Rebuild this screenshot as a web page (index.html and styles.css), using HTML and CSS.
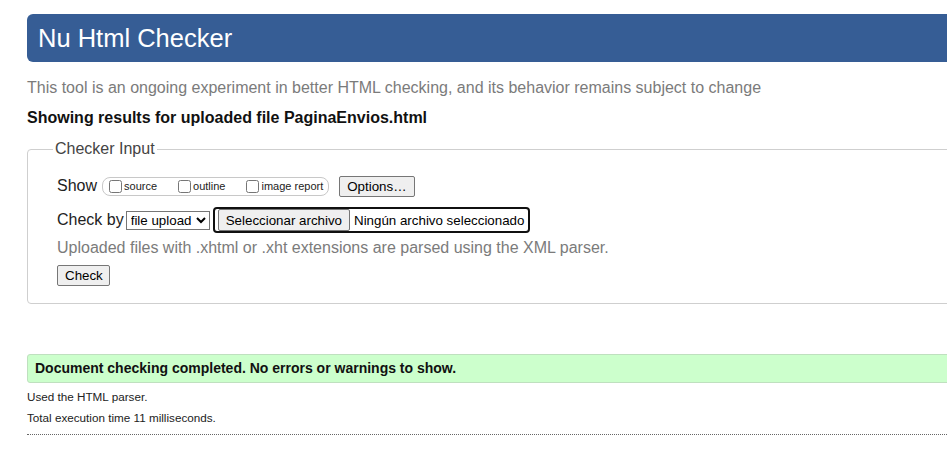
FILE: index.html
```html
<!DOCTYPE html>
<html lang="en">
<head>
<meta charset="utf-8">
<title>Nu Html Checker</title>
<link rel="stylesheet" href="styles.css">
</head>
<body>
<div class="page">
  <h1 class="title">Nu Html Checker</h1>
  <p class="intro">This tool is an ongoing experiment in better HTML checking, and its behavior remains subject to change</p>
  <p class="showing">Showing results for uploaded file PaginaEnvios.html</p>
  <form class="checker">
    <fieldset class="input-set">
      <legend class="legend">Checker Input</legend>
      <div class="row show-row">
        <span class="row-label">Show</span>
        <span class="show-box">
          <label class="opt"><input type="checkbox">source</label>
          <label class="opt"><input type="checkbox">outline</label>
          <label class="opt"><input type="checkbox">image report</label>
        </span>
        <button type="button" class="btn options-btn">Options…</button>
      </div>
      <div class="row by-row">
        <span class="row-label">Check by</span>
        <select class="by-select"><option>file upload</option></select>
        <span class="file-input">
          <button type="button" class="btn file-btn">Seleccionar archivo</button>
          <span class="file-name">Ningún archivo seleccionado</span>
        </span>
      </div>
      <p class="hint">Uploaded files with .xhtml or .xht extensions are parsed using the XML parser.</p>
      <div class="row">
        <button type="button" class="btn check-btn">Check</button>
      </div>
    </fieldset>
  </form>
  <p class="success">Document checking completed. No errors or warnings to show.</p>
  <p class="meta">Used the HTML parser.</p>
  <p class="meta">Total execution time 11 milliseconds.</p>
  <div class="rule"></div>
</div>
</body>
</html>
```
FILE: styles.css
```css
html, body {
  overflow: hidden;
}
body {
  margin: 0;
  background: #fff;
  font-family: "Liberation Sans", Arial, sans-serif;
  color: #222;
}
.page {
  width: 1100px;
  padding: 14px 0 0 27px;
}
.title {
  margin: 0;
  height: 48px;
  line-height: 48px;
  padding-left: 11px;
  background: #365d95;
  color: #fff;
  font-size: 25.5px;
  font-weight: normal;
  border-radius: 6px;
}
.intro {
  margin: 16px 0 0;
  font-size: 16px;
  line-height: 20px;
  color: #7b7b7b;
}
.showing {
  margin: 10px 0 0;
  font-size: 16px;
  line-height: 20px;
  font-weight: bold;
  color: #111;
}
.checker {
  margin: 12px 0 0;
}
.input-set {
  margin: 0;
  border: 1px solid #cfcfcf;
  border-radius: 4px;
  padding: 18px 0 17px 29px;
}
.legend {
  padding: 0 2px;
  margin-left: -4px;
  font-size: 16px;
  color: #444;
}
.row {
  display: flex;
  align-items: center;
}
.row-label {
  font-size: 16px;
  color: #222;
}
.show-row {
  height: 20px;
}
.show-box {
  display: flex;
  align-items: center;
  margin-left: 5px;
  height: 17px;
  border: 1px solid #c8c8c8;
  border-radius: 8px;
  padding: 0 5px 0 2px;
}
.opt {
  display: flex;
  align-items: center;
  font-size: 11px;
  margin-right: 17px;
}
.opt:last-child {
  margin-right: 0;
}
.opt input {
  margin: 1px 2px 0 4px;
  width: 13px;
  height: 13px;
}
.btn {
  font-family: "Liberation Sans", Arial, sans-serif;
  font-size: 13.33px;
  color: #000;
  background: #efefef;
  border: 1px solid #767676;
  border-radius: 2px;
  padding: 1px 7px;
  height: 21px;
}
.options-btn {
  margin-left: 10px;
}
.by-row {
  margin-top: 11px;
  height: 26px;
}
.by-select {
  margin-left: 2px;
  font-family: "Liberation Sans", Arial, sans-serif;
  font-size: 13.33px;
  height: 19px;
  width: 84px;
  padding: 0;
  border: 1px solid #767676;
  border-radius: 0;
  background: #fff;
  color: #000;
}
.file-input {
  display: flex;
  align-items: center;
  margin-left: 3px;
  height: 22px;
  border: 2px solid #101010;
  border-radius: 4px;
  padding: 0 4px 0 3px;
}
.file-btn {
  height: 22px;
  margin-right: 4px;
}
.file-name {
  font-size: 13.33px;
  color: #000;
}
.hint {
  margin: 5px 0 0;
  font-size: 16px;
  line-height: 20px;
  color: #7b7b7b;
}
.check-btn {
  margin-top: 7px;
  padding: 1px 6px 1px 7px;
}
.success {
  margin: 50px 0 0;
  height: 27px;
  line-height: 27px;
  padding-left: 7px;
  background: #ccffcc;
  border: 1px solid #bfe0bf;
  border-radius: 3px;
  font-size: 14px;
  font-weight: bold;
  color: #111;
}
.meta {
  margin: 6px 0 0;
  font-size: 11.7px;
  line-height: 15px;
  color: #222;
}
.rule {
  margin-top: 9px;
  border-top: 1px dotted #666;
}
```
